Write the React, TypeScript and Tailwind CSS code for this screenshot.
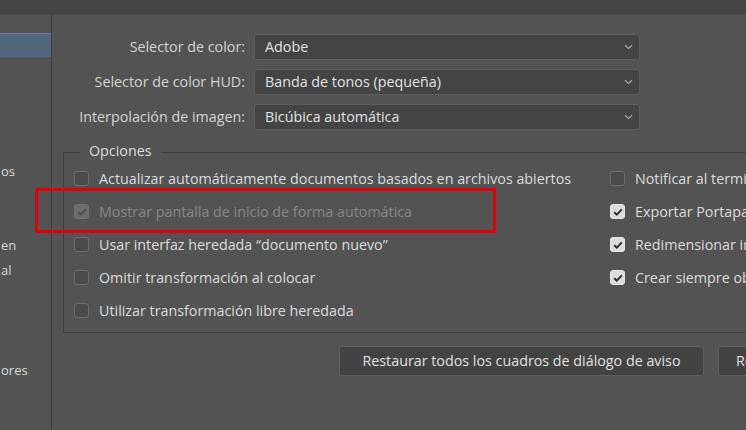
import React from 'react';

const font = { fontFamily: '"Open Sans", "Noto Sans", sans-serif' };

const Chevron = () => (
  <svg width="9" height="6" viewBox="0 0 9 6" className="text-[#a8a8a8]">
    <path d="M1 1.2 L4.5 4.5 L8 1.2" fill="none" stroke="currentColor" strokeWidth="1.2" />
  </svg>
);

const Check = ({ color }: { color: string }) => (
  <svg width="10" height="8" viewBox="0 0 10 8">
    <path d="M1.2 4.2 L3.8 6.6 L8.8 1.4" fill="none" stroke={color} strokeWidth="2" />
  </svg>
);

const Box = ({ checked, disabled }: { checked?: boolean; disabled?: boolean }) => {
  if (checked && disabled) {
    return (
      <span className="w-[15px] h-[15px] rounded-[3px] bg-[#6c6c6c] border border-[#707070] flex items-center justify-center shrink-0">
        <Check color="#4e4e4e" />
      </span>
    );
  }
  if (checked) {
    return (
      <span className="w-[15px] h-[15px] rounded-[3px] bg-[#dcdcdc] border border-[#e6e6e6] flex items-center justify-center shrink-0">
        <Check color="#2f2f2f" />
      </span>
    );
  }
  return <span className="w-[15px] h-[15px] rounded-[3px] bg-[#4a4a4a] border border-[#6c6c6c] shrink-0" />;
};

const Option = ({ label, checked, disabled }: { label: string; checked?: boolean; disabled?: boolean }) => (
  <div className="h-[33px] flex items-center gap-[10px] whitespace-nowrap">
    <Box checked={checked} disabled={disabled} />
    <span className={disabled ? 'text-[#868686]' : 'text-[#dcdcdc]'}>{label}</span>
  </div>
);

const Select = ({ label, value }: { label: string; value: string }) => (
  <div className="flex items-center">
    <div className="w-[202px] text-right text-[#d4d4d4] pr-[9px] whitespace-nowrap">{label}</div>
    <div className="w-[386px] h-[26px] bg-[#444444] border border-[#5d5d5d] rounded-[3px] flex items-center justify-between pl-[10px] pr-[6px] text-[#e2e2e2]">
      <span>{value}</span>
      <Chevron />
    </div>
  </div>
);

export default function App() {
  return (
    <div className="w-[746px] h-[430px] bg-[#535353] flex flex-col overflow-hidden text-[14.3px]" style={font}>
      <div className="h-[15px] bg-[#444444] border-b border-[#4a4a4a] shrink-0" />
      <div className="flex flex-1 min-h-0">
        {/* sidebar, cut off on the left */}
        <div className="w-[52px] shrink-0 border-r border-[#3e3e3e] pt-[18px] text-[#d8d8d8] text-[13px] leading-[16px] overflow-hidden">
          <div className="h-[24px] bg-[#52667e] border-t border-[#6b7d92]" />
          <div className="mt-[106px] pl-[1px]">os</div>
          <div className="mt-[58px] pl-[1px]">en</div>
          <div className="mt-[9px] pl-[1px]">al</div>
          <div className="mt-[84px] pl-[1px]">ores</div>
        </div>

        <div className="flex-1 min-w-0 pt-[19px]">
          <div className="flex flex-col gap-[9px]">
            <Select label="Selector de color:" value="Adobe" />
            <Select label="Selector de color HUD:" value="Banda de tonos (pequeña)" />
            <Select label="Interpolación de imagen:" value="Bicúbica automática" />
          </div>

          <div className="relative ml-[11px] mt-[22px] h-[181px] border border-[#3f3f3f] border-r-0 w-[700px]">
            <span className="absolute -top-[13px] left-[16px] px-[9px] bg-[#535353] text-[#dcdcdc]">Opciones</span>
            <div className="flex pt-[9px] pl-[10px]">
              <div className="w-[536px] shrink-0">
                <Option label="Actualizar automáticamente documentos basados en archivos abiertos" />
                <Option label="Mostrar pantalla de inicio de forma automática" checked disabled />
                <Option label="Usar interfaz heredada “documento nuevo”" />
                <Option label="Omitir transformación al colocar" />
                <Option label="Utilizar transformación libre heredada" />
              </div>
              <div className="overflow-hidden">
                <Option label="Notificar al terminar" />
                <Option label="Exportar Portapapeles" checked />
                <Option label="Redimensionar imágenes" checked />
                <Option label="Crear siempre objetos" checked />
              </div>
            </div>
            {/* red highlight */}
            <div className="absolute left-[-29px] top-[35px] w-[461px] h-[45px] border-[3px] border-[#e3000b]" />
          </div>

          <div className="flex gap-[14px] mt-[13px] pl-[287px] whitespace-nowrap">
            <div className="w-[365px] h-[30px] shrink-0 bg-[#434343] border border-[#5f5f5f] rounded-[3px] flex items-center justify-center text-[#e0e0e0]">
              Restaurar todos los cuadros de diálogo de aviso
            </div>
            <div className="w-[120px] h-[30px] shrink-0 bg-[#434343] border border-[#5f5f5f] rounded-[3px] flex items-center pl-[17px] text-[#e0e0e0]">
              Restablecer
            </div>
          </div>
        </div>
      </div>
    </div>
  );
}
